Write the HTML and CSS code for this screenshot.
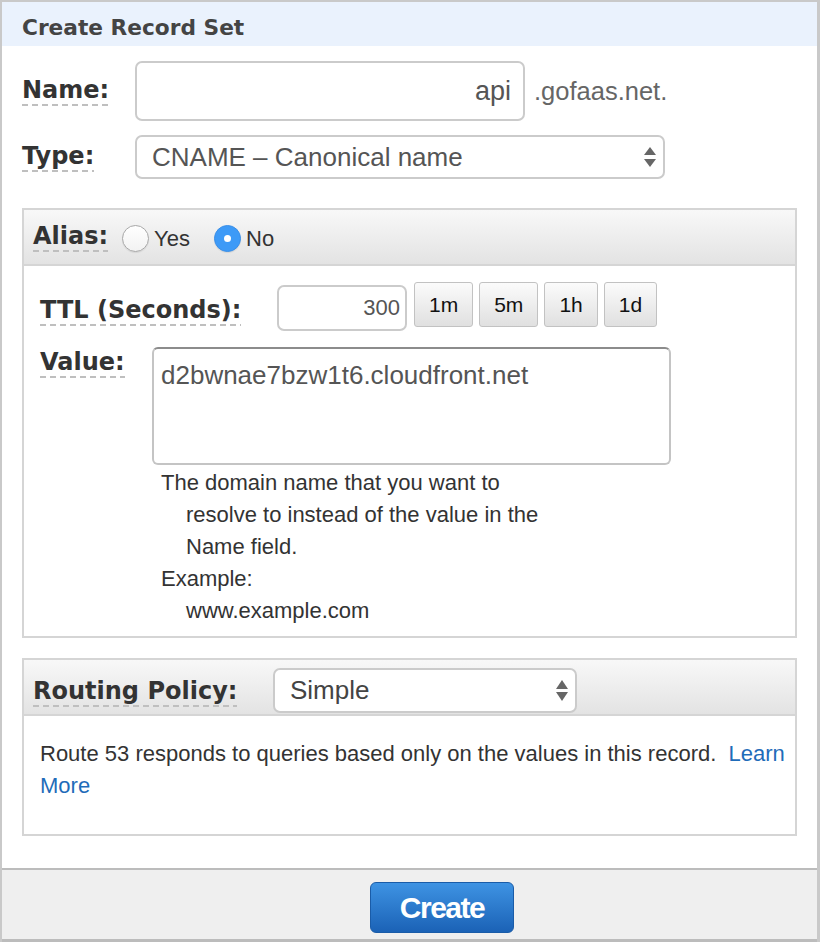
FILE: index.html
```html
<!DOCTYPE html>
<html lang="en">
<head>
<meta charset="utf-8">
<title>Create Record Set</title>
<link rel="stylesheet" href="styles.css">
</head>
<body>
<div class="dialog">
  <div class="title">Create Record Set</div>
  <div class="content">
    <div class="row row-name">
      <div class="lbl-cell main-cell"><span class="lbl">Name:</span></div>
      <div class="field name-field">api</div>
      <span class="suffix">.gofaas.net.</span>
    </div>
    <div class="row row-type">
      <div class="lbl-cell main-cell"><span class="lbl">Type:</span></div>
      <div class="field select type-select">
        <span>CNAME – Canonical name</span>
        <svg class="arrows" width="12" height="20" viewBox="0 0 12 20"><polygon points="6,0 12,8 0,8" fill="#666"/><polygon points="0,12 12,12 6,20" fill="#666"/></svg>
      </div>
    </div>

    <div class="panel alias-panel">
      <div class="panel-head alias-head">
        <span class="lbl">Alias:</span>
        <span class="radio first"></span><span class="radio-text">Yes</span>
        <span class="radio checked"></span><span class="radio-text">No</span>
      </div>
      <div class="panel-body alias-body">
        <div class="ttl-row">
          <div class="lbl-cell ttl-cell"><span class="lbl">TTL (Seconds):</span></div>
          <div class="field ttl-field">300</div>
          <div class="ttl-btns">
            <button class="tbtn">1m</button>
            <button class="tbtn">5m</button>
            <button class="tbtn">1h</button>
            <button class="tbtn">1d</button>
          </div>
        </div>
        <div class="value-row">
          <div class="lbl-cell value-cell"><span class="lbl">Value:</span></div>
          <div class="value-col">
            <div class="textarea">d2bwnae7bzw1t6.cloudfront.net</div>
            <div class="help">
              <p>The domain name that you want to<br>resolve to instead of the value in the<br>Name field.</p>
              <p>Example:<br>www.example.com</p>
            </div>
          </div>
        </div>
      </div>
    </div>

    <div class="panel routing-panel">
      <div class="panel-head routing-head">
        <div class="lbl-cell routing-cell"><span class="lbl">Routing Policy:</span></div>
        <div class="field select routing-select">
          <span>Simple</span>
          <svg class="arrows" width="12" height="21" viewBox="0 0 12 21"><polygon points="6,0 12,9 0,9" fill="#666"/><polygon points="0,12 12,12 6,21" fill="#666"/></svg>
        </div>
      </div>
      <div class="panel-body routing-body">Route 53 responds to queries based only on the values in this record.&nbsp; <a class="link" href="#">Learn<br>More</a></div>
    </div>
  </div>
  <div class="footer">
    <button class="create">Create</button>
  </div>
</div>
</body>
</html>
```

FILE: styles.css
```css
* { box-sizing: border-box; }
html, body { margin: 0; padding: 0; background: #fff; }
body { font-family: "Liberation Sans", Arial, Helvetica, sans-serif; color: #333; }

.dialog {
  width: 820px;
  height: 942px;
  border-top: 2px solid #c9c9c9;
  border-left: 2px solid #c9c9c9;
  border-right: 3px solid #c9c9c9;
  display: flex;
  flex-direction: column;
}

.title {
  height: 44px;
  background: #eaf2fd;
  padding: 8px 0 0 20px;
  font: bold 21.7px/36px "DejaVu Sans", Verdana, sans-serif;
  color: #444;
}

.content { padding: 15px 20px 32px 20px; }

.row { display: flex; align-items: center; }
.row-type { margin-top: 14px; }

.lbl-cell { flex: 0 0 auto; }
.main-cell { width: 113px; }

.lbl {
  display: inline-block;
  font: bold 24px/28px "DejaVu Sans", Verdana, sans-serif;
  color: #333;
  padding-bottom: 2px;
  white-space: nowrap;
  background-image: linear-gradient(to right, #bfbfbf 6px, transparent 6px);
  background-size: 10px 2px;
  background-repeat: repeat-x;
  background-position: 0 100%;
}

.field {
  border: 2px solid #cbcbcb;
  border-radius: 7px;
  background: #fff;
  color: #555;
  display: flex;
  align-items: center;
}

.name-field {
  width: 390px;
  height: 60px;
  justify-content: flex-end;
  padding-right: 12px;
  font-size: 27px;
}

.suffix { margin-left: 9px; font-size: 25.5px; color: #666; }

.select { justify-content: space-between; }

.type-select {
  width: 530px;
  height: 44px;
  padding: 0 7px 0 15px;
  font-size: 26px;
}

.arrows { display: block; flex: 0 0 auto; }

.panel {
  border: 2px solid #d5d5d5;
  margin-top: 29px;
}
.routing-panel { margin-top: 20px; }

.panel-head {
  height: 56px;
  border-bottom: 2px solid #d5d5d5;
  background: linear-gradient(#f8f8f8, #e3e3e3);
  display: flex;
  padding-left: 9px;
}

.alias-head { align-items: center; }

.radio {
  width: 27px;
  height: 27px;
  border-radius: 50%;
  border: 1px solid #a8a8a8;
  background: linear-gradient(#ffffff, #f2f2f2);
  box-shadow: 0 1px 1px rgba(0,0,0,0.08);
  position: relative;
  margin-left: 24px;
  margin-top: 2px;
}
.radio.first { margin-left: 14px; }
.radio.checked {
  background: #3d9af7;
  border-color: #3a8fe8;
}
.radio.checked::after {
  content: "";
  position: absolute;
  left: 9px;
  top: 9px;
  width: 7px;
  height: 7px;
  border-radius: 50%;
  background: #fff;
}
.radio-text { margin-left: 5px; font-size: 22px; color: #333; padding-top: 3px; }

.panel-body { padding-left: 16px; }

.alias-body { padding-top: 16px; padding-bottom: 9px; }

.ttl-row { display: flex; align-items: flex-start; }
.ttl-cell { width: 237px; margin-top: 14px; }

.ttl-field {
  width: 130px;
  height: 46px;
  margin-top: 3px;
  justify-content: flex-end;
  padding-right: 5px;
  font-size: 22px;
}

.ttl-btns { display: flex; gap: 6px; margin-left: 7px; }

.tbtn {
  height: 45px;
  padding: 0 14px;
  border: 1px solid #c2c2c2;
  border-radius: 3px;
  background: linear-gradient(#fbfbfb, #e0e0e0);
  font: 21px "Liberation Sans", Arial, sans-serif;
  color: #111;
}

.value-row { display: flex; align-items: flex-start; margin-top: 16px; }
.value-cell { width: 112px; margin-top: 1px; }

.textarea {
  width: 519px;
  height: 118px;
  border: 2px solid #c4c4c4;
  border-top-color: #8c8c8c;
  border-radius: 6px;
  padding: 11px 7px 0 7px;
  font-size: 26px;
  line-height: 30px;
  color: #555;
}

.help {
  margin-top: 2px;
  padding-left: 34px;
  font-size: 22px;
  line-height: 32px;
  color: #333;
}
.help p { margin: 0; text-indent: -25px; }

.routing-head { align-items: flex-start; }
.routing-cell { width: 240px; margin-top: 17px; }

.routing-select {
  width: 304px;
  height: 45px;
  margin-top: 8px;
  padding: 0 7px 0 15px;
  font-size: 26px;
  color: #444;
}

.routing-body {
  padding: 22px 8px 32px 16px;
  font-size: 22px;
  line-height: 32px;
  color: #333;
  white-space: nowrap;
}
.link { color: #1f6cb9; text-decoration: none; }

.footer {
  flex: 1;
  border-top: 2px solid #bcbcbc;
  border-bottom: 3px solid #bcbcbc;
  background: #efefef;
  padding: 12px 0 0 368px;
}

.create {
  width: 144px;
  height: 51px;
  border: 1px solid #1a5ca8;
  border-radius: 6px;
  background: linear-gradient(#3e93e3, #1b62b6);
  color: #fff;
  font: bold 30px "Liberation Sans", Arial, sans-serif;
  letter-spacing: -1.5px;
  padding: 0;
}
```
